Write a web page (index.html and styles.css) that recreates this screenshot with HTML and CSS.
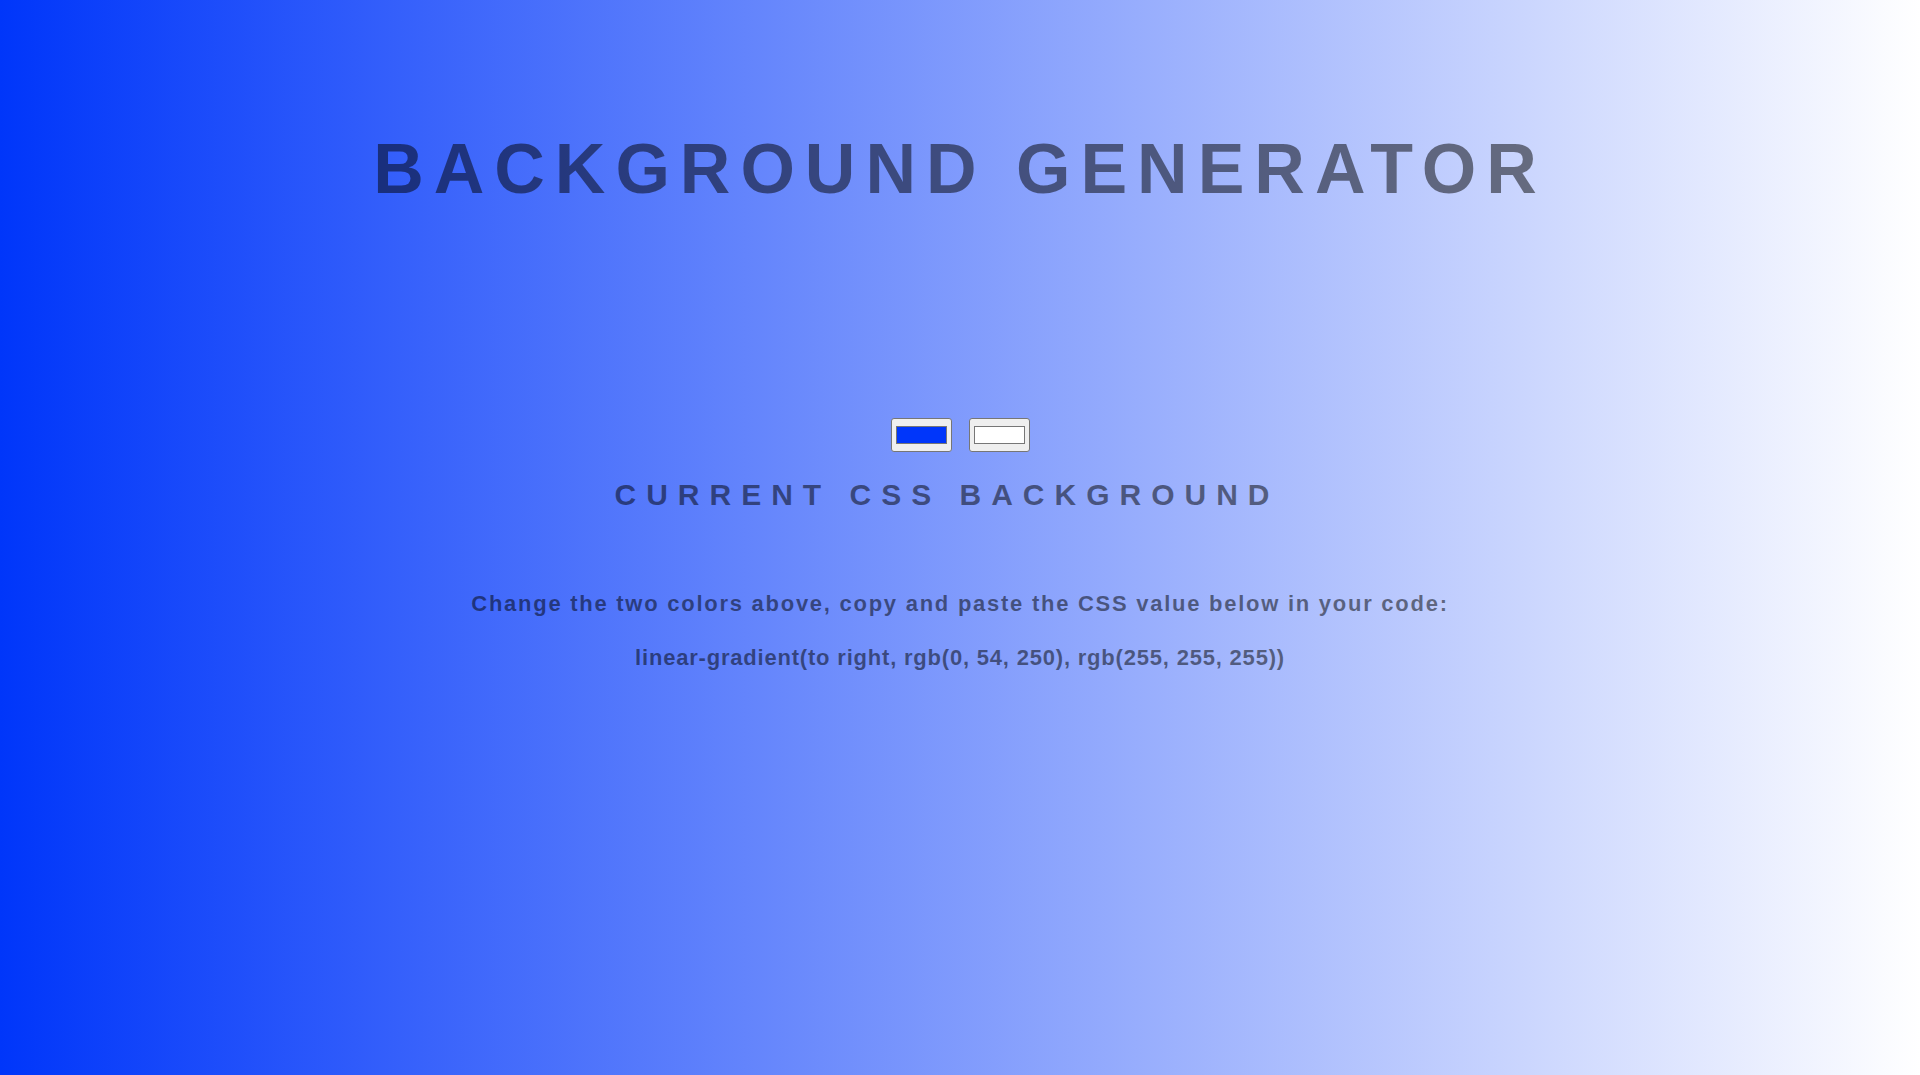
FILE: index.html
```html
<!DOCTYPE html>
<html lang="en">
<head>
<meta charset="utf-8">
<title>Background Generator</title>
<link rel="stylesheet" href="styles.css">
</head>
<body>
  <main class="page">
    <h1 class="title">Background Generator</h1>
    <div class="pickers">
      <div class="picker"><span class="swatch swatch-blue"></span></div>
      <div class="picker"><span class="swatch swatch-white"></span></div>
    </div>
    <h3 class="subtitle">Current CSS Background</h3>
    <p class="hint">Change the two colors above, copy and paste the CSS value below in your code:</p>
    <p class="value">linear-gradient(to right, rgb(0, 54, 250), rgb(255, 255, 255))</p>
  </main>
</body>
</html>
```

FILE: styles.css
```css
html, body {
  margin: 0;
  padding: 0;
}

body {
  min-height: 1075px;
  background: linear-gradient(to right, rgb(0, 54, 250), rgb(255, 255, 255));
  font-family: "Liberation Sans", Arial, sans-serif;
  color: rgba(0, 0, 0, 0.5);
  text-align: center;
}

.page {
  display: flex;
  flex-direction: column;
  align-items: center;
  padding-top: 129px;
}

.title {
  margin: 0;
  font-size: 70px;
  font-weight: bold;
  line-height: 80px;
  letter-spacing: 10px;
  text-transform: uppercase;
}

.pickers {
  display: flex;
  gap: 17px;
  margin-top: 209px;
}

.picker {
  box-sizing: border-box;
  width: 61px;
  height: 34px;
  padding: 7px 4px;
  border: 1px solid #767676;
  border-radius: 3px;
  background: #efefef;
  display: flex;
}

.swatch {
  flex: 1;
  border: 1px solid #777777;
}

.swatch-blue {
  background: rgb(0, 54, 250);
}

.swatch-white {
  background: #ffffff;
}

.subtitle {
  margin: 26px 0 0;
  padding-right: 26px;
  font-size: 30px;
  font-weight: bold;
  line-height: 34px;
  letter-spacing: 10px;
  text-transform: uppercase;
}

.hint,
.value {
  font-size: 22px;
  font-weight: bold;
  line-height: 23px;
}

.hint {
  margin: 80px 0 0;
  letter-spacing: 1.74px;
}

.value {
  margin: 31px 0 0;
  letter-spacing: 0.8px;
}
```
